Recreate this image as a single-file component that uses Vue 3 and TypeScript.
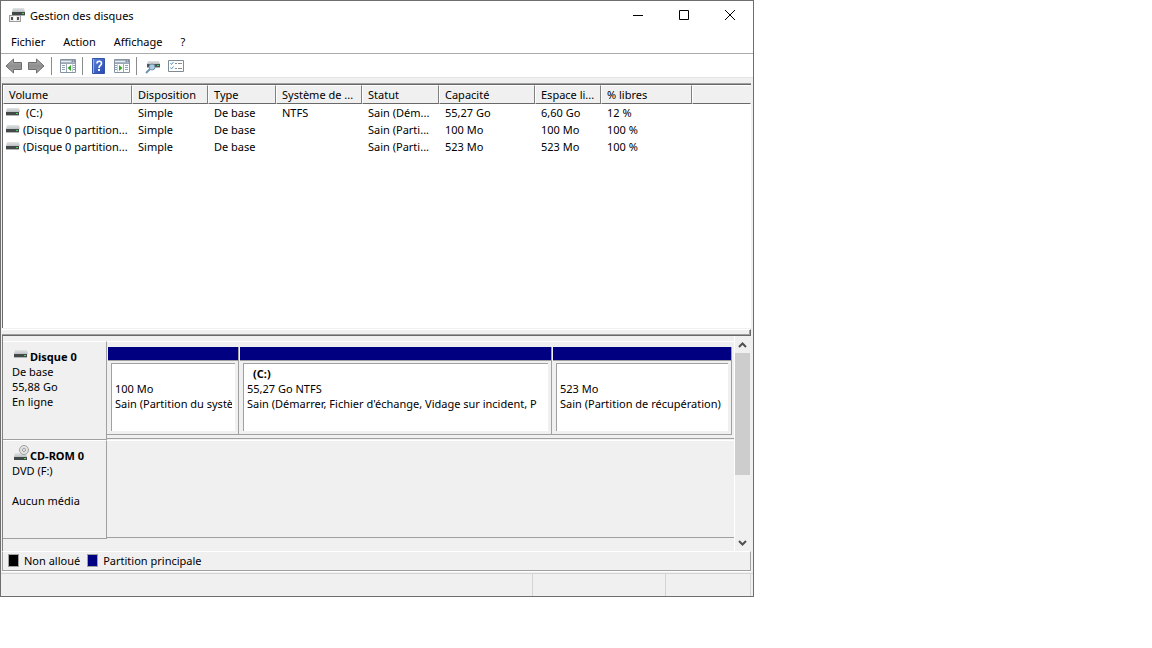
<script setup lang="ts">
interface Volume {
  name: string
  layout: string
  type: string
  fs: string
  status: string
  capacity: string
  free: string
  percent: string
}
interface Partition {
  label: string
  size: string
  status: string
}

const menus: string[] = ['Fichier', 'Action', 'Affichage', '?']
const columns: string[] = ['Volume', 'Disposition', 'Type', 'Système de ...', 'Statut', 'Capacité', 'Espace li...', '% libres', '']
const volumes: Volume[] = [
  { name: '(C:)', layout: 'Simple', type: 'De base', fs: 'NTFS', status: 'Sain (Dém...', capacity: '55,27 Go', free: '6,60 Go', percent: '12 %' },
  { name: '(Disque 0 partition...', layout: 'Simple', type: 'De base', fs: '', status: 'Sain (Parti...', capacity: '100 Mo', free: '100 Mo', percent: '100 %' },
  { name: '(Disque 0 partition...', layout: 'Simple', type: 'De base', fs: '', status: 'Sain (Parti...', capacity: '523 Mo', free: '523 Mo', percent: '100 %' },
]
const partitions: Partition[] = [
  { label: '', size: '100 Mo', status: 'Sain (Partition du système' },
  { label: '(C:)', size: '55,27 Go NTFS', status: "Sain (Démarrer, Fichier d'échange, Vidage sur incident, P" },
  { label: '', size: '523 Mo', status: 'Sain (Partition de récupération)' },
]
</script>

<template>
  <main class="window">
    <svg class="defs" width="0" height="0" aria-hidden="true">
      <defs>
        <linearGradient id="lid" x1="0" y1="0" x2="0" y2="1">
          <stop offset="0" stop-color="#e2e4e5" />
          <stop offset="1" stop-color="#bcc0c2" />
        </linearGradient>
        <linearGradient id="arrow" x1="0" y1="0" x2="0" y2="1">
          <stop offset="0" stop-color="#b4b4b4" />
          <stop offset="0.5" stop-color="#8f8f8f" />
          <stop offset="1" stop-color="#a8a8a8" />
        </linearGradient>
        <linearGradient id="book" x1="0" y1="0" x2="1" y2="1">
          <stop offset="0" stop-color="#5d86dd" />
          <stop offset="1" stop-color="#2547ad" />
        </linearGradient>
        <symbol id="drive" viewBox="0 0 14 8">
          <path d="M1 0h12l1 4H0z" fill="url(#lid)" />
          <rect x="0" y="4" width="13" height="3" fill="#434948" />
          <rect x="0" y="7" width="13" height="1" fill="#b4b6b6" />
          <rect x="10" y="5" width="2" height="1" fill="#3fe05a" />
        </symbol>
      </defs>
    </svg>

    <header class="title-bar">
      <svg class="app-icon" width="16" height="16" viewBox="0 0 16 16" aria-hidden="true">
        <path d="M4 1h11l1 4H3z" fill="url(#lid)" />
        <rect x="3" y="5" width="13" height="3" fill="#434948" />
        <rect x="13" y="6" width="2" height="1" fill="#36d657" />
        <rect x="3" y="8" width="13" height="1" fill="#b4b6b6" />
        <rect x="0" y="8" width="12" height="7" fill="#9c9c9c" />
        <rect x="1" y="9" width="10" height="5" fill="#ececec" />
        <rect x="2" y="10" width="2" height="3" fill="#505050" />
        <rect x="8" y="10" width="2" height="3" fill="#505050" />
        <rect x="5" y="9" width="2" height="5" fill="#fff" />
      </svg>
      <h1>Gestion des disques</h1>
      <div class="caption">
        <button type="button" aria-label="Réduire">
          <svg width="12" height="12" viewBox="0 0 12 12"><path d="M1 6.500h10" stroke="#000" /></svg>
        </button>
        <button type="button" aria-label="Agrandir">
          <svg width="12" height="12" viewBox="0 0 12 12"><path d="M1.500 1.500h9v9h-9z" fill="none" stroke="#000" /></svg>
        </button>
        <button type="button" aria-label="Fermer">
          <svg width="12" height="12" viewBox="0 0 12 12"><path d="M1 1l10 10M11 1L1 11" stroke="#000" /></svg>
        </button>
      </div>
    </header>

    <nav class="menu-bar">
      <button v-for="menu in menus" :key="menu" type="button">{{ menu }}</button>
    </nav>

    <div class="toolbar" role="toolbar">
      <button type="button" aria-label="Précédent">
        <svg width="17" height="16" viewBox="0 0 17 16"><path d="M1 8L8.500 1V4.500h8v7H8.500V15z" fill="url(#arrow)" stroke="#6d6d6d" /></svg>
      </button>
      <button type="button" aria-label="Suivant">
        <svg width="17" height="16" viewBox="0 0 17 16"><path d="M16 8L8.500 1V4.500h-8v7h8V15z" fill="url(#arrow)" stroke="#6d6d6d" /></svg>
      </button>
      <span class="divider"></span>
      <button type="button" aria-label="Afficher ou masquer l’arborescence">
        <svg width="16" height="14" viewBox="0 0 16 14">
          <path d="M.5.5h15v13H.5z" fill="#fff" stroke="#8693a3" />
          <path d="M1 1h14v3H1z" fill="#a9b4c2" />
          <path d="M1 2.500h10" stroke="#e8edf2" />
          <path d="M12 2h1M14 2h1" stroke="#5c6a7c" />
          <path d="M6.500 5v8M1 4.500h14" stroke="#9aa7b5" />
          <path d="M2 6.500h3M2 8.500h3M2 10.500h3M13 6.500h2M13 8.500h2M13 10.500h2" stroke="#8ea0b6" />
          <path d="M12.500 5v8" stroke="#c9d1da" />
          <path d="M11 6v6L7.500 9z" fill="#35a82c" />
        </svg>
      </button>
      <span class="divider"></span>
      <button type="button" aria-label="Aide">
        <svg width="13" height="16" viewBox="0 0 13 16">
          <path d="M.5.5h12v15H.5z" fill="url(#book)" stroke="#3553a8" />
          <path d="M1.500 1v14" stroke="#9bb2ea" />
          <path d="M5 5.500C5 2.500 9.500 2.500 9.500 5.500C9.500 7.500 7 7.500 7 10" fill="none" stroke="#fff" stroke-width="1.600" />
          <rect x="6" y="11" width="2" height="2" fill="#fff" />
        </svg>
      </button>
      <button type="button" aria-label="Volet Actions">
        <svg width="16" height="14" viewBox="0 0 16 14">
          <path d="M.5.5h15v13H.5z" fill="#fff" stroke="#8693a3" />
          <path d="M1 1h14v3H1z" fill="#a9b4c2" />
          <path d="M1 2.500h10" stroke="#e8edf2" />
          <path d="M12 2h1M14 2h1" stroke="#5c6a7c" />
          <path d="M9.500 5v8M1 4.500h14" stroke="#9aa7b5" />
          <path d="M11 6.500h3M11 8.500h3M11 10.500h3M1 6.500h2M1 8.500h2M1 10.500h2" stroke="#8ea0b6" />
          <path d="M3.500 5v8" stroke="#c9d1da" />
          <path d="M5 6v6L8.500 9z" fill="#35a82c" />
        </svg>
      </button>
      <span class="divider"></span>
      <button type="button" aria-label="Actualiser">
        <svg width="16" height="16" viewBox="0 0 16 16">
          <path d="M3 3h11l1 3H2z" fill="url(#lid)" />
          <rect x="2" y="6" width="13" height="3" fill="#4a5355" />
          <rect x="12" y="7" width="2" height="1" fill="#3fe05a" />
          <rect x="2" y="9" width="13" height="1" fill="#b4b6b6" />
          <path d="M5 11L1 15" stroke="#6d93b4" stroke-width="2" />
          <circle cx="7" cy="9" r="3" fill="#a9cce4" stroke="#6f90a8" />
        </svg>
      </button>
      <button type="button" aria-label="Propriétés">
        <svg width="16" height="12" viewBox="0 0 16 12">
          <path d="M.5.5h15v11H.5z" fill="#fff" stroke="#7f8a94" />
          <path d="M2.500 3l1 1.500L5.500 2M2.500 7.500l1 1.500L5.500 6.500" fill="none" stroke="#4c9ad6" />
          <path d="M7 3.500h2M10 3.500h4M7 8.500h2M10 8.500h4" stroke="#8d8d8d" />
        </svg>
      </button>
    </div>

    <section class="volume-list">
      <table>
        <colgroup>
          <col v-for="(column, i) in columns" :key="i" :class="'col-' + i" />
        </colgroup>
        <thead>
          <tr><th v-for="column in columns" :key="column" scope="col">{{ column }}</th></tr>
        </thead>
        <tbody>
          <tr v-for="(v, i) in volumes" :key="i">
            <td class="name" :class="{ lettered: v.name === '(C:)' }">
              <svg width="14" height="8"><use href="#drive" /></svg>{{ v.name }}
            </td>
            <td>{{ v.layout }}</td>
            <td>{{ v.type }}</td>
            <td>{{ v.fs }}</td>
            <td>{{ v.status }}</td>
            <td>{{ v.capacity }}</td>
            <td>{{ v.free }}</td>
            <td>{{ v.percent }}</td>
            <td></td>
          </tr>
        </tbody>
      </table>
    </section>
    <div class="splitter"></div>

    <section class="disk-view">
      <div class="disks">
        <article class="disk">
          <div class="disk-label">
            <h2><svg class="disk-icon" width="14" height="8"><use href="#drive" /></svg>Disque 0</h2>
            <p>De base</p>
            <p>55,88 Go</p>
            <p>En ligne</p>
          </div>
          <div class="disk-map">
            <div v-for="p in partitions" :key="p.size" class="partition">
              <div class="stripe"></div>
              <div class="partition-frame">
                <div class="partition-body">
                  <h3>{{ p.label }}</h3>
                  <p>{{ p.size }}</p>
                  <p>{{ p.status }}</p>
                </div>
              </div>
            </div>
          </div>
        </article>
        <article class="disk">
          <div class="disk-label">
            <h2>
              <svg class="cd-icon" width="15" height="16" viewBox="0 0 15 16" aria-hidden="true">
                <path d="M1 8h11l1 4H0z" fill="url(#lid)" />
                <circle cx="10" cy="5" r="4.500" fill="#e2e2e2" stroke="#a2a2a2" />
                <circle cx="10" cy="5" r="1.500" fill="#fff" stroke="#999" />
                <rect y="12" width="13" height="3" fill="#434948" />
                <rect x="10" y="13" width="2" height="1" fill="#3fe05a" />
              </svg>CD-ROM 0
            </h2>
            <p>DVD (F:)</p>
            <p></p>
            <p>Aucun média</p>
          </div>
          <div class="disk-map"></div>
        </article>
      </div>
      <div class="scrollbar">
        <button type="button" aria-label="Défiler vers le haut">
          <svg width="9" height="6" viewBox="0 0 9 6"><path d="M1 5l3.500-3.500L8 5" fill="none" stroke="#505050" stroke-width="2" /></svg>
        </button>
        <div class="track"><div class="thumb"></div></div>
        <button type="button" aria-label="Défiler vers le bas">
          <svg width="9" height="6" viewBox="0 0 9 6"><path d="M1 1l3.500 3.500L8 1" fill="none" stroke="#505050" stroke-width="2" /></svg>
        </button>
      </div>
    </section>

    <div class="legend">
      <span class="legend-item"><i class="swatch unallocated"></i>Non alloué</span>
      <span class="legend-item"><i class="swatch primary"></i>Partition principale</span>
    </div>
    <footer class="status-bar"><span></span><span></span><span></span></footer>
  </main>
</template>

<style>
body {
  background: #fff;
}
</style>

<style scoped>
.window {
  box-sizing: border-box;
  width: calc(100vw - 398px);
  height: calc(100vh - 51px);
  display: flex;
  flex-direction: column;
  border: 1px solid #6e6e6e;
  background: #f0f0f0;
  color: #000;
  font: 11px/15px "Noto Sans", "Open Sans", sans-serif;
}
.defs {
  position: absolute;
}
h1, h2, h3, p {
  margin: 0;
  font-size: inherit;
}
button {
  border: 0;
  padding: 0;
  background: none;
  color: inherit;
  font: inherit;
  display: flex;
  align-items: center;
  justify-content: center;
}
.title-bar {
  display: flex;
  align-items: center;
  height: 28px;
  padding-left: 8px;
  background: #fff;
}
h1 {
  flex: 1;
  margin-left: 5px;
  font-weight: 400;
}
.caption {
  display: flex;
}
.caption button {
  width: 46px;
  height: 28px;
}
.menu-bar {
  display: flex;
  height: 24px;
  gap: 18px;
  padding-left: 10px;
  background: #fff;
  border-bottom: 1px solid #ababab;
}
.toolbar {
  display: flex;
  align-items: center;
  height: 23px;
  padding-left: 1px;
  background: #fff;
  border-bottom: 1px solid #e4e4e4;
}
.toolbar button {
  width: 23px;
  height: 22px;
}
.divider {
  width: 1px;
  height: 18px;
  margin: 0 4px 0 3px;
  background: #8c8c8c;
}
.volume-list {
  flex: 1;
  min-height: 0;
  margin: 5px 2px 0 1px;
  border-top: 1px solid #a0a0a0;
  border-left: 1px solid #696969;
  background: #fff;
}
table {
  width: 100%;
  table-layout: fixed;
  border-collapse: separate;
  border-spacing: 0;
  border-top: 1px solid #696969;
}
.col-0 { width: 129px; }
.col-1 { width: 76px; }
.col-2 { width: 68px; }
.col-3 { width: 86px; }
.col-4 { width: 77px; }
.col-5 { width: 96px; }
.col-6 { width: 66px; }
.col-7 { width: 91px; }
th, td {
  height: 17px;
  padding: 0 0 0 6px;
  white-space: nowrap;
  text-align: left;
  font-weight: 400;
}
th {
  background: #f0f0f0;
  border: 1px solid #fff;
  border-right-color: #808080;
  border-bottom-color: #696969;
  padding-left: 5px;
}
th:last-child {
  border-right-color: #f0f0f0;
}
.name {
  padding-left: 3px;
}
.name svg {
  margin-right: 3px;
  vertical-align: 1px;
}
.lettered svg {
  margin-right: 6px;
}
.splitter {
  height: 5px;
  margin: 1px 2px 0 1px;
  border-top: 1px solid #fff;
  border-right: 1px solid #696969;
  border-bottom: 1px solid #696969;
  box-shadow: inset -1px -1px #a0a0a0;
}
.disk-view {
  display: flex;
  height: 215px;
  margin: 0 2px 0 1px;
  border-left: 1px solid #808080;
}
.disks {
  flex: 1;
  min-width: 0;
  padding-top: 5px;
  border-right: 1px solid #fff;
}
.disk {
  display: flex;
  height: 99px;
}
.disk-label {
  box-sizing: border-box;
  width: 104px;
  padding: 7px 0 0 9px;
  border-top: 1px solid #fff;
  border-right: 1px solid #a0a0a0;
  border-bottom: 1px solid #a0a0a0;
}
h2 {
  display: flex;
  height: 15px;
  padding-left: 2px;
  white-space: nowrap;
}
.disk-label p {
  min-height: 15px;
}
.disk-icon {
  flex: none;
  margin: 1px 2px 0 0;
}
.cd-icon {
  flex: none;
  margin: -3px 1px 0 0;
}
.disk-map {
  flex: 1;
  min-width: 0;
  display: grid;
  grid-template-columns: 132fr 313fr 180fr;
  box-sizing: border-box;
  margin-bottom: 1px;
  padding: 5px 2px 3px 0;
  border-top: 1px solid #fff;
  border-bottom: 1px solid #a0a0a0;
}
.partition {
  display: flex;
  flex-direction: column;
  min-width: 0;
  padding-left: 1px;
  border-right: 1px solid #a0a0a0;
  border-bottom: 1px solid #a0a0a0;
}
.stripe {
  height: 13px;
  background: #000080;
}
.partition-frame {
  flex: 1;
  display: flex;
  min-width: 0;
  padding: 2px 3px 3px;
  border-top: 1px solid #a0a0a0;
}
.partition-body {
  flex: 1;
  min-width: 0;
  padding: 2px 3px 0;
  background: #fff;
  border-top: 1px solid #a0a0a0;
  border-left: 1px solid #a0a0a0;
}
.partition-body h3 {
  height: 15px;
  padding-left: 6px;
}
.partition-body p {
  overflow: hidden;
  white-space: nowrap;
}
.scrollbar {
  display: flex;
  flex-direction: column;
  width: 15px;
  padding: 1px 1px 0 0;
}
.scrollbar button {
  height: 16px;
}
.track {
  flex: 1;
}
.thumb {
  height: 67%;
  background: #cdcdcd;
}
.legend {
  display: flex;
  align-items: center;
  height: 16px;
  gap: 7px;
  margin: 0 2px 0 1px;
  padding: 0 0 2px 5px;
  border: 1px solid #a0a0a0;
  border-top-color: #fff;
  box-shadow: 0 1px #fff;
}
.legend-item {
  display: flex;
  align-items: center;
  gap: 5px;
}
.swatch {
  box-sizing: border-box;
  width: 11px;
  height: 13px;
  border: 1px solid #a0a0a0;
}
.unallocated {
  background: #000;
}
.primary {
  background: #000080;
}
.status-bar {
  display: grid;
  grid-template-columns: 532fr 133fr 85fr;
  height: 22px;
  margin-top: 2px;
  padding-right: 2px;
  border-top: 1px solid #d4d4d4;
}
.status-bar span {
  border-right: 1px solid #d4d4d4;
}
</style>
